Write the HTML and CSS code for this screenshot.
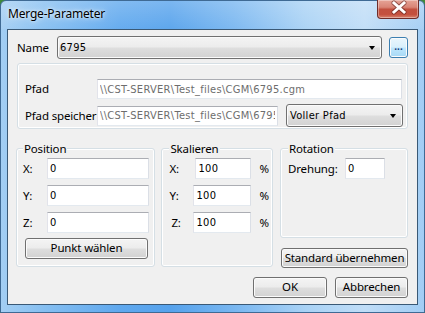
FILE: index.html
```html
<!DOCTYPE html>
<html>
<head>
<meta charset="utf-8">
<link rel="stylesheet" href="styles.css">
</head>
<body>
<div class="window">
  <div class="titlebar">
    <span class="title">Merge-Parameter</span>
    <div class="close">
      <svg width="42" height="19" viewBox="0 0 42 19">
        <path d="M17 4 L27 13 M27 4 L17 13" stroke="#5a1e1a" stroke-width="5" stroke-linecap="round" opacity="0.55" fill="none"/>
        <path d="M17 4 L27 13 M27 4 L17 13" stroke="#ffffff" stroke-width="3" stroke-linecap="square" fill="none"/>
      </svg>
    </div>
  </div>
  <div class="client">
    <div class="name-row">
      <span class="lbl name-lbl">Name</span>
      <div class="combo name-combo"><span class="ctext">6795</span><i class="arrow"></i></div>
      <div class="btn dots">...</div>
    </div>

    <div class="group pfad">
      <div class="prow prow1">
        <span class="lbl plbl">Pfad</span>
        <input class="edit ro path-wide" readonly value="\\CST-SERVER\Test_files\CGM\6795.cgm">
      </div>
      <div class="prow prow2">
        <span class="lbl plbl">Pfad speicher</span>
        <input class="edit ro path-narrow" readonly value="\\CST-SERVER\Test_files\CGM\6795.cgm">
        <div class="combo voller"><span class="ctext">Voller Pfad</span><i class="arrow"></i></div>
      </div>
    </div>

    <div class="lower">
      <div class="group position">
        <span class="legend">Position</span>
        <div class="frow first"><span class="lbl flbl">X:</span><input class="edit pos-edit" value="0"></div>
        <div class="frow"><span class="lbl flbl">Y:</span><input class="edit pos-edit" value="0"></div>
        <div class="frow"><span class="lbl flbl">Z:</span><input class="edit pos-edit" value="0"></div>
        <div class="btn punkt">Punkt wählen</div>
      </div>

      <div class="group skal">
        <span class="legend">Skalieren</span>
        <div class="frow first"><span class="lbl slbl">X:</span><input class="edit skal-edit" value="100"><span class="lbl pct">%</span></div>
        <div class="frow"><span class="lbl slbl slbl-y">Y:</span><input class="edit skal-edit" value="100"><span class="lbl pct">%</span></div>
        <div class="frow"><span class="lbl slbl slbl-z">Z:</span><input class="edit skal-edit" value="100"><span class="lbl pct">%</span></div>
      </div>

      <div class="rotcol">
        <div class="group rot">
          <span class="legend">Rotation</span>
          <div class="frow first"><span class="lbl rlbl">Drehung:</span><input class="edit rot-edit" value="0"></div>
        </div>
        <div class="btn std">Standard übernehmen</div>
      </div>
    </div>

    <div class="actions">
      <div class="btn ok">OK</div>
      <div class="btn cancel">Abbrechen</div>
    </div>
  </div>
</div>
</body>
</html>
```

FILE: styles.css
```css
html, body {
  margin: 0;
  padding: 0;
}
body {
  width: 425px;
  height: 313px;
  overflow: hidden;
  font-family: "Noto Sans", "Open Sans", sans-serif;
  font-size: 11.5px;
  letter-spacing: -0.15px;
  color: #000;
  background: #3d8a3a;
}
.window {
  width: 425px;
  height: 313px;
  box-sizing: border-box;
  display: flex;
  flex-direction: column;
  border: 1px solid #3f6a94;
  border-radius: 6px 6px 0 0;
  padding: 0 6px 7px 6px;
  background:
    linear-gradient(180deg, rgba(255,255,255,0.22) 0px, rgba(255,255,255,0.05) 28px, rgba(255,255,255,0) 29px),
    linear-gradient(90deg, #a3cef3 0%, #86bff1 10%, #5fa8ee 28%, #56a2ec 40%, #78b6f0 55%, #a9d2f5 72%, #c0ddf7 86%, #a2cdf4 100%);
}
.titlebar {
  height: 28px;
  display: flex;
  align-items: flex-start;
}
.title {
  margin-left: 1px;
  padding-top: 5px;
  line-height: 16px;
  font-size: 12px;
  letter-spacing: -0.2px;
  color: #000;
  text-shadow: 0 0 6px rgba(255,255,255,0.9), 0 0 3px rgba(255,255,255,0.7);
}
.close {
  margin-left: auto;
  margin-right: -1px;
  margin-top: -1px;
  width: 42px;
  height: 19px;
  box-sizing: border-box;
  border: 1px solid #6e2d2a;
  border-top: none;
  border-radius: 0 0 4px 4px;
  background: linear-gradient(180deg, #e6a497 0%, #d98576 40%, #c2503f 52%, #c4503e 80%, #d8826d 100%);
  box-shadow: inset 0 0 0 1px rgba(255,255,255,0.35);
  overflow: hidden;
}
.close svg {
  display: block;
  margin: -1px 0 0 -1px;
}
.client {
  flex: 1;
  border: 1px solid #3a5976;
  background: #f0f0f0;
  display: flex;
  flex-direction: column;
  padding: 6px 9px 0 8px;
}
.lbl {
  line-height: 16px;
  white-space: nowrap;
}
.name-row {
  display: flex;
  align-items: center;
  height: 23px;
}
.name-lbl {
  margin-left: 1px;
  width: 40px;
}
.combo {
  position: relative;
  box-sizing: border-box;
  height: 23px;
  border: 1px solid #707070;
  border-radius: 3px;
  background: linear-gradient(180deg, #f4f4f4 0%, #ececec 48%, #dedede 52%, #d2d2d2 100%);
  box-shadow: inset 0 0 0 1px #fbfbfb;
  display: flex;
  align-items: center;
  font-family: "DejaVu Sans Condensed", "Liberation Sans", sans-serif;
  font-size: 11px;
  letter-spacing: 0.3px;
}
.ctext {
  padding-left: 2px;
}
.voller .ctext {
  padding-left: 3px;
}
.arrow {
  position: absolute;
  right: 6px;
  top: 9px;
  width: 0;
  height: 0;
  border-left: 3.5px solid transparent;
  border-right: 3.5px solid transparent;
  border-top: 4px solid #000;
}
.name-combo {
  width: 325px;
}
.btn {
  box-sizing: border-box;
  border: 1px solid #707070;
  border-radius: 3px;
  background: linear-gradient(180deg, #f4f4f4 0%, #ececec 48%, #dedede 52%, #d2d2d2 100%);
  box-shadow: inset 0 0 0 1px #fbfbfb;
  text-align: center;
  line-height: 18px;
  white-space: nowrap;
}
.dots {
  margin-left: 7px;
  width: 19px;
  height: 21px;
  border-color: #3c7fb1;
  background: linear-gradient(180deg, #eaf6fd 0%, #d9f0fc 48%, #bee6fd 52%, #a7d9f5 100%);
  line-height: 17px;
  color: #1c3f7a;
  font-family: "Liberation Sans", sans-serif;
  font-size: 10px;
  font-weight: bold;
  letter-spacing: 0;
}
.group {
  box-sizing: border-box;
  border: 1px solid #d5dfe5;
  border-radius: 3px;
  box-shadow: inset 0 0 0 1px #fff;
}
.pfad {
  margin-top: 4px;
  margin-left: 1px;
  width: 391px;
  height: 66px;
  padding: 15px 0 0 7px;
}
.prow {
  display: flex;
  align-items: center;
}
.prow1 {
  height: 20px;
}
.prow2 {
  height: 23px;
  margin-top: 5px;
}
.plbl {
  width: 72px;
}
.edit {
  box-sizing: border-box;
  height: 21px;
  margin: 0;
  border: 1px solid;
  border-color: #abadb3 #dbdfe6 #e3e9ef #e2e3ea;
  background: #fff;
  padding: 0 2px;
  font-family: "DejaVu Sans Condensed", "Liberation Sans", sans-serif;
  font-size: 11px;
  letter-spacing: 0.3px;
  color: #000;
  outline: none;
}
.ro {
  color: #6d6d6d;
  height: 20px;
}
.path-wide {
  width: 305px;
}
.path-narrow {
  width: 181px;
}
.voller {
  margin-left: 8px;
  width: 117px;
}
.lower {
  display: flex;
  align-items: flex-start;
  margin-top: 19px;
}
.legend {
  align-self: flex-start;
  margin-top: -8px;
  background: #f0f0f0;
  padding: 0 1px;
  line-height: 16px;
}
.position {
  width: 140px;
  height: 119px;
  display: flex;
  flex-direction: column;
  padding-left: 6px;
}
.frow {
  display: flex;
  align-items: center;
  margin-top: 6px;
}
.frow.first {
  margin-top: 1px;
}
.flbl {
  width: 24px;
}
.pos-edit {
  width: 102px;
}
.punkt {
  margin-top: 5px;
  margin-left: 2px;
  width: 123px;
  height: 21px;
}
.skal {
  margin-left: 6px;
  width: 112px;
  height: 119px;
  display: flex;
  flex-direction: column;
  padding-left: 7px;
}
.slbl {
  width: 26px;
}
.slbl-y {
  width: 24px;
}
.slbl-z {
  padding-left: 2px;
  width: 22px;
}
.skal-edit {
  width: 56px;
}
.slbl-y + .skal-edit, .slbl-z + .skal-edit {
  width: 58px;
}
.pct {
  margin-left: 8px;
}
.rotcol {
  margin-left: 7px;
  width: 128px;
  display: flex;
  flex-direction: column;
}
.rot {
  width: 128px;
  height: 90px;
  display: flex;
  flex-direction: column;
  padding-left: 7px;
}
.rlbl {
  width: 57px;
}
.rot-edit {
  width: 40px;
}
.std {
  margin-top: 10px;
  margin-left: 1px;
  width: 127px;
  height: 20px;
  line-height: 17px;
}
.actions {
  display: flex;
  justify-content: flex-end;
  margin-top: 9px;
}
.ok {
  width: 74px;
  height: 21px;
}
.cancel {
  margin-left: 8px;
  width: 73px;
  height: 21px;
}
```
